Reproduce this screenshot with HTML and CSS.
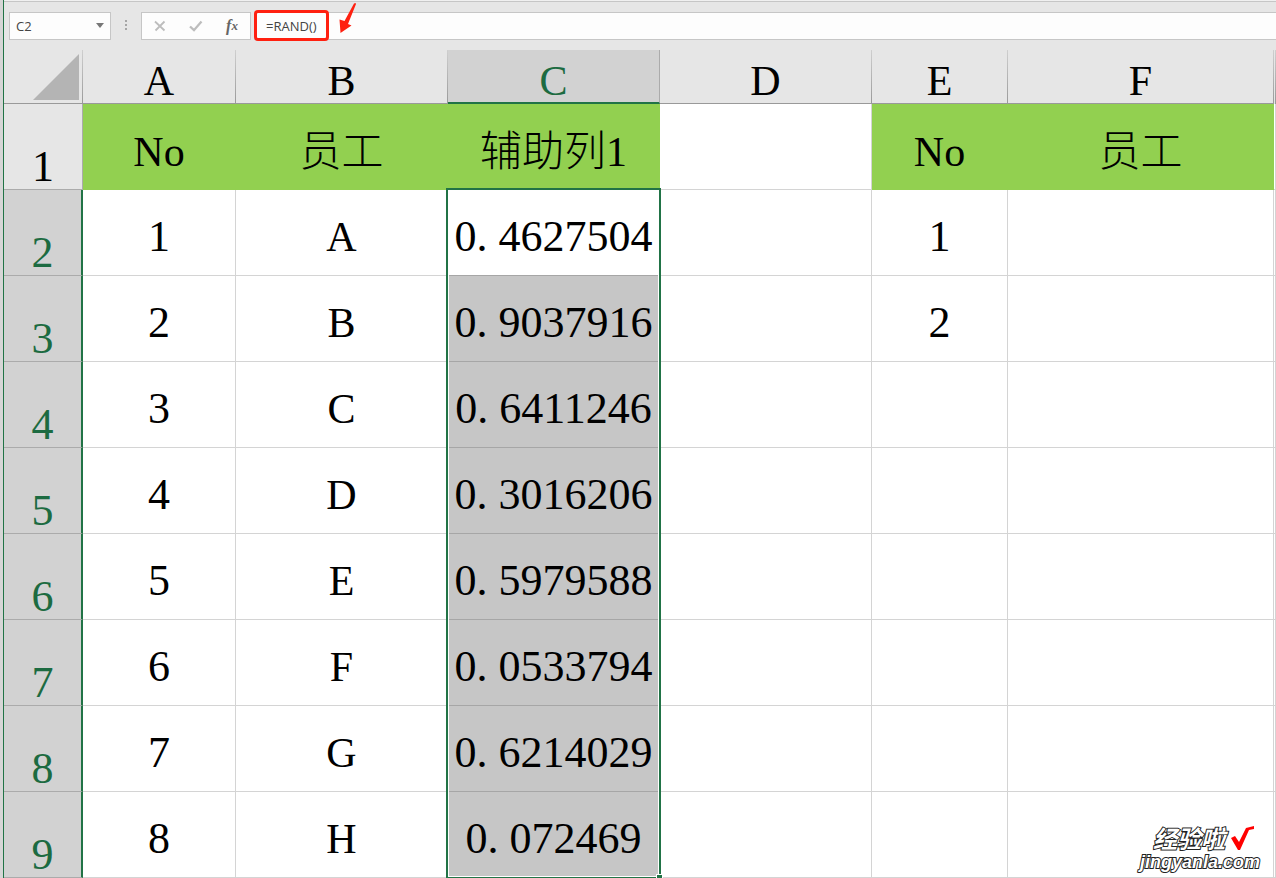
FILE: index.html
```
<!DOCTYPE html>
<html lang="zh-CN">
<head>
<meta charset="utf-8">
<title>C2</title>
<link rel="stylesheet" href="styles.css">
</head>
<body>
<main class="window">
  <div class="formula-bar">
    <div class="name-box">
      <input class="name-input" type="text" value="C2" aria-label="名称框">
      <button class="name-toggle" type="button" aria-label="展开"><svg width="8" height="5" viewBox="0 0 8 5"><path d="M0 0h8L4 5z" fill="#777"/></svg></button>
    </div>
    <svg class="grip" width="2" height="11" viewBox="0 0 2 11"><path d="M0 0h2v2H0zM0 4h2v2H0zM0 8h2v2H0z" fill="#a6a6a6"/></svg>
    <div class="actions">
      <button class="action" type="button" aria-label="取消"><svg width="12" height="12" viewBox="0 0 12 12"><path d="M1 1.500l9.500 9M10.500 1.500L1.500 10.500" fill="none" stroke="#bdbdbd" stroke-width="1.800"/></svg></button>
      <button class="action" type="button" aria-label="输入"><svg width="14" height="12" viewBox="0 0 14 12"><path d="M1 6.500l4 3.700L12.500 1.500" fill="none" stroke="#bdbdbd" stroke-width="2.300"/></svg></button>
      <button class="action fx" type="button" aria-label="插入函数"><i>f</i><i class="fx-x">x</i></button>
    </div>
    <div class="formula">
      <input class="formula-input" type="text" value="=RAND()" aria-label="编辑栏">
      <span class="highlight"></span>
      <svg class="arrow" width="18" height="32" viewBox="0 0 18 32"><path d="M16.500 0L15 0.500 5.500 18 0.500 16.500 1.500 30 12.500 22.500 9 21 17 1z" fill="#ff2010"/></svg>
    </div>
  </div>
  <table class="sheet">
    <colgroup><col class="w-head"><col class="w-a"><col class="w-wide"><col class="w-wide"><col class="w-wide"><col class="w-e"><col class="w-f"><col></colgroup>
    <thead>
      <tr><td class="corner"><svg width="46" height="46" viewBox="0 0 46 46"><path d="M46 0v46H0z" fill="#b4b4b4"/></svg></td><th scope="col">A</th><th scope="col">B</th><th scope="col" class="active">C</th><th scope="col">D</th><th scope="col">E</th><th scope="col">F</th><th></th></tr>
    </thead>
    <tbody>
      <tr><th scope="row">1</th><td class="title">No</td><td class="title">员工</td><td class="title">辅助列1</td><td></td><td class="title">No</td><td class="title">员工</td><td></td></tr>
      <tr class="picked"><th scope="row">2</th><td>1</td><td class="letter">A</td><td class="current">0<span class="dot">.</span>4627504<span class="selection"><span class="handle"></span></span></td><td></td><td>1</td><td></td><td></td></tr>
      <tr class="picked"><th scope="row">3</th><td>2</td><td class="letter">B</td><td class="shade">0<span class="dot">.</span>9037916</td><td></td><td>2</td><td></td><td></td></tr>
      <tr class="picked"><th scope="row">4</th><td>3</td><td class="letter">C</td><td class="shade">0<span class="dot">.</span>6411246</td><td></td><td></td><td></td><td></td></tr>
      <tr class="picked"><th scope="row">5</th><td>4</td><td class="letter">D</td><td class="shade">0<span class="dot">.</span>3016206</td><td></td><td></td><td></td><td></td></tr>
      <tr class="picked"><th scope="row">6</th><td>5</td><td class="letter">E</td><td class="shade">0<span class="dot">.</span>5979588</td><td></td><td></td><td></td><td></td></tr>
      <tr class="picked"><th scope="row">7</th><td>6</td><td class="letter">F</td><td class="shade">0<span class="dot">.</span>0533794</td><td></td><td></td><td></td><td></td></tr>
      <tr class="picked"><th scope="row">8</th><td>7</td><td class="letter">G</td><td class="shade">0<span class="dot">.</span>6214029</td><td></td><td></td><td></td><td></td></tr>
      <tr class="picked"><th scope="row">9</th><td>8</td><td class="letter">H</td><td class="shade">0<span class="dot">.</span>072469</td><td></td><td></td><td></td><td></td></tr>
    </tbody>
  </table>
  <div class="watermark">
    <div class="mark-top"><span>经验啦</span><svg width="24" height="24" viewBox="0 0 24 24"><path d="M1 12l4-2 4 6L16 2l8-2v3l-5 1-9 20H8z" fill="#f00" stroke="none"/></svg></div>
    <div class="mark-url">jingyanla.com</div>
  </div>
</main>
</body>
</html>
```
FILE: styles.css
```
:root {
  --row: 86px;
  --green: #217346;
  --line: #d4d4d4;
}
* { box-sizing: border-box; }
body {
  margin: 0;
  padding-left: 3px;
  background: #d6d6d6;
  font-family: "Open Sans", "Noto Sans CJK SC", sans-serif;
}
.window {
  position: relative;
  overflow: hidden;
  border-left: 1px solid var(--green);
  background: #e6e6e6;
}
.formula-bar {
  display: flex;
  align-items: center;
  height: 50px;
  padding: 2px 0 0 5px;
  border-top: 1px solid #f0f0f0;
  box-shadow: inset 0 1px #c6c6c6;
}
.name-box, .actions, .formula {
  display: flex;
  align-items: center;
  height: 28px;
  border: 1px solid #c6c6c6;
  background: #fdfdfd;
}
.formula-bar { padding-top: 0; }
.name-box { width: 102px; }
.name-input, .formula-input {
  min-width: 0;
  border: 0;
  padding: 0;
  background: none;
  color: #444;
  font: 13px/18px "Open Sans", sans-serif;
}
.name-input { flex: 1; padding-left: 6px; }
.name-toggle, .action {
  display: flex;
  align-items: center;
  justify-content: center;
  border: 0;
  padding: 0;
  background: none;
  color: #666;
}
.name-toggle { width: 20px; height: 26px; }
.grip { margin: 0 14px; }
.actions { width: 110px; margin-right: 3px; }
.action { flex: 1; height: 26px; }
.fx { font: bold 16px/20px "Liberation Serif", serif; }
.fx-x { font-size: 13px; }
.formula { position: relative; flex: 1; border-right: 0; }
.formula-input { flex: 1; padding-left: 11px; }
.highlight {
  position: absolute;
  left: -1px;
  top: -3px;
  width: 75px;
  height: 31px;
  border: 3px solid #ff2010;
  border-radius: 4px;
}
.arrow { position: absolute; left: 84px; top: -10px; }

.sheet {
  width: 100%;
  table-layout: fixed;
  border-spacing: 0;
  font: 44px/44px "Liberation Serif", "Noto Sans CJK SC", serif;
  color: #000;
  text-align: center;
}
.w-head { width: 79px; }
.w-a { width: 153px; }
.w-wide { width: 212px; }
.w-e { width: 136px; }
.w-f { width: 266px; }
.sheet th, .sheet td {
  height: var(--row);
  padding: 8px 0 0;
  border-right: 1px solid var(--line);
  border-bottom: 1px solid var(--line);
  background: #fff;
  font-weight: 300;
}
.sheet th {
  padding: 0;
  vertical-align: bottom;
  border-color: #ababab;
  background: #e6e6e6;
}
.sheet thead th, .sheet thead .corner {
  height: 54px;
  border-bottom-color: #999;
  border-right: 1px solid;
  border-image: linear-gradient(#d0d0d0, #999) 1;
}
.sheet thead th, .sheet .letter { font-size: 42px; }
.sheet thead .corner {
  padding: 0 3px 3px 0;
  background: #e6e6e6;
  text-align: right;
  vertical-align: bottom;
}
.corner svg { display: block; margin-left: auto; }
.sheet thead .active {
  border-image: none;
  border-right-color: #ababab;
  border-bottom: 2px solid var(--green);
  background: #d2d2d2;
  color: #1c6b41;
  line-height: 42px;
}
.sheet .picked th {
  border-right: 2px solid var(--green);
  background: #d2d2d2;
  color: #1c6b41;
}
.sheet .title { padding-top: 10px; border-color: #92d050; background: #92d050; font-size: 42px; }
.sheet .shade { border-bottom-color: #a6a6a6; background: #c6c6c6; }
.dot { display: inline-block; width: 22px; text-align: left; }
.sheet .current { position: relative; border-bottom-color: #a6a6a6; }
.selection {
  position: absolute;
  z-index: 1;
  left: -2px;
  right: -2px;
  top: -2px;
  height: calc(var(--row) * 8 + 2px);
  border: 2px solid var(--green);
  border-bottom-width: 1px;
  box-shadow: inset 0 0 0 1px #fff;
}
.handle {
  position: absolute;
  right: -3px;
  bottom: -1px;
  width: 5px;
  height: 3px;
  background: var(--green);
  box-shadow: 0 0 0 1px #fff;
}
.watermark {
  position: absolute;
  z-index: 2;
  right: 16px;
  bottom: 6px;
  color: #fff;
  -webkit-text-stroke: 2px #222;
  paint-order: stroke fill;
}
.mark-top {
  display: flex;
  align-items: center;
  justify-content: flex-end;
  gap: 5px;
  padding-right: 6px;
  font: italic 700 24px/24px "Noto Sans CJK SC", sans-serif;
}
.mark-url {
  padding-top: 2px;
  font: italic 700 18px/20px "Liberation Sans", sans-serif;
}
```
